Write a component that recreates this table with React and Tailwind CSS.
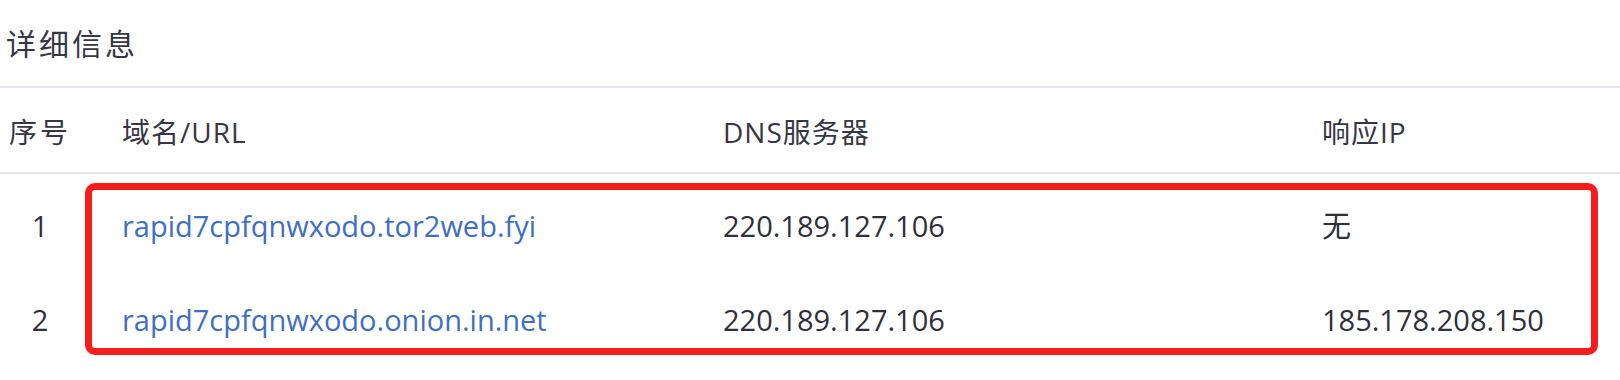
export default function App() {
  const rows = [
    { id: 1, url: 'rapid7cpfqnwxodo.tor2web.fyi', dns: '220.189.127.106', ip: '无' },
    { id: 2, url: 'rapid7cpfqnwxodo.onion.in.net', dns: '220.189.127.106', ip: '185.178.208.150' },
  ];

  return (
    <div
      className="relative w-[1620px] h-[380px] bg-white overflow-hidden text-[#363644]"
      style={{ fontFamily: '"Open Sans", "Noto Sans CJK SC", sans-serif' }}
    >
      <div className="h-[86px] flex items-center pl-[6px] pt-[1px] text-[30px] tracking-[3px]">详细信息</div>
      <div className="h-[2px] bg-[#e4e4f4]" />

      <div className="grid grid-cols-[122px_601px_599px_1fr] h-[84px] items-center pt-[4px] text-[28px]">
        <div className="pr-[42px] text-center tracking-[3px]">序号</div>
        <div className="tracking-[1px]">域名/URL</div>
        <div className="tracking-[1px]">DNS服务器</div>
        <div className="tracking-[1px]">响应IP</div>
      </div>
      <div className="h-[2px] bg-[#e4e4f4]" />

      <div className="pt-[5px] text-[29px] text-[#30303c]">
        {rows.map((r) => (
          <div key={r.id} className="grid grid-cols-[122px_601px_599px_1fr] h-[94px] items-center">
            <div className="pr-[42px] text-center">{r.id}</div>
            <div className="text-[#3f6fc2]">{r.url}</div>
            <div>{r.dns}</div>
            <div>{r.ip}</div>
          </div>
        ))}
      </div>

      {/* red annotation box */}
      <div className="absolute left-[85px] top-[183px] w-[1513px] h-[172px] border-[7px] border-[#f81d1d] rounded-[10px] pointer-events-none" />
    </div>
  );
}
